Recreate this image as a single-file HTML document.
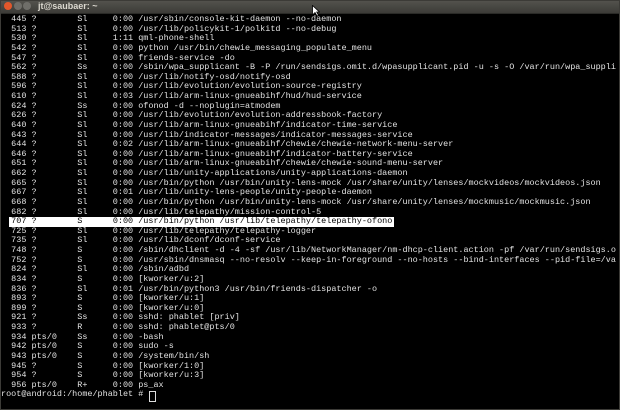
<!DOCTYPE html>
<html><head><meta charset="utf-8"><style>
html,body{margin:0;padding:0;background:#000;width:620px;height:410px;overflow:hidden}
#tb{position:absolute;left:0;top:0;width:620px;height:13px;background:linear-gradient(#55544f,#3c3b37);border-bottom:1px solid #2a2a27}
.b{position:absolute;top:2px;width:8px;height:8px;border-radius:50%}
#title{position:absolute;left:38px;top:0px;font:bold 9px "Liberation Sans",sans-serif;color:#dcd9d0;line-height:13px}
#term{position:absolute;left:1px;top:15px;width:617px;height:393px;overflow:hidden}
pre{position:relative;margin:0;font-family:"Liberation Mono",monospace;font-size:8.48px;line-height:9.63px;color:#e2e2e2;white-space:pre}
#hl{position:absolute;left:8px;top:202px;width:385px;height:9.6px;background:#fff}
#cur{position:absolute;left:148px;top:376px;width:5px;height:9px;border:1px solid #ddd}
#frame{position:absolute;left:0;top:0;width:618px;height:408px;border:1px solid #3c3b37;pointer-events:none}
</style></head><body>
<div id="tb">
<div class="b" style="left:4px;background:#e2572b"></div>
<div class="b" style="left:14px;background:#6f6e69"></div>
<div class="b" style="left:23px;background:#6f6e69"></div>
<div id="title">jt@saubaer: ~</div>
<svg style="position:absolute;left:312px;top:5px" width="8" height="12" viewBox="0 0 8 12"><path d="M0.5 0.5 L0.5 10 L3 7.5 L5 11 L6.5 10.3 L4.7 7 L7.5 7 Z" fill="#fff" stroke="#000" stroke-width="0.8"/></svg>
</div>
<div id="term">
<div id="hl"></div>
<pre>  445 ?        Sl     0:00 /usr/sbin/console-kit-daemon --no-daemon
  513 ?        Sl     0:00 /usr/lib/policykit-1/polkitd --no-debug
  530 ?        Sl     1:11 qml-phone-shell
  542 ?        Sl     0:00 python /usr/bin/chewie_messaging_populate_menu
  547 ?        Sl     0:00 friends-service -do
  562 ?        Ss     0:00 /sbin/wpa_supplicant -B -P /run/sendsigs.omit.d/wpasupplicant.pid -u -s -O /var/run/wpa_suppli
  588 ?        Sl     0:00 /usr/lib/notify-osd/notify-osd
  596 ?        Sl     0:00 /usr/lib/evolution/evolution-source-registry
  610 ?        Sl     0:03 /usr/lib/arm-linux-gnueabihf/hud/hud-service
  624 ?        Ss     0:00 ofonod -d --noplugin=atmodem
  626 ?        Sl     0:00 /usr/lib/evolution/evolution-addressbook-factory
  640 ?        Sl     0:00 /usr/lib/arm-linux-gnueabihf/indicator-time-service
  643 ?        Sl     0:00 /usr/lib/indicator-messages/indicator-messages-service
  644 ?        Sl     0:02 /usr/lib/arm-linux-gnueabihf/chewie/chewie-network-menu-server
  646 ?        Sl     0:00 /usr/lib/arm-linux-gnueabihf/indicator-battery-service
  651 ?        Sl     0:00 /usr/lib/arm-linux-gnueabihf/chewie/chewie-sound-menu-server
  662 ?        Sl     0:00 /usr/lib/unity-applications/unity-applications-daemon
  665 ?        Sl     0:00 /usr/bin/python /usr/bin/unity-lens-mock /usr/share/unity/lenses/mockvideos/mockvideos.json
  667 ?        Sl     0:01 /usr/lib/unity-lens-people/unity-people-daemon
  668 ?        Sl     0:00 /usr/bin/python /usr/bin/unity-lens-mock /usr/share/unity/lenses/mockmusic/mockmusic.json
  682 ?        Sl     0:00 /usr/lib/telepathy/mission-control-5
  <span style="color:#000">707 ?        S      0:00 /usr/bin/python /usr/lib/telepathy/telepathy-ofono</span>
  725 ?        Sl     0:00 /usr/lib/telepathy/telepathy-logger
  735 ?        Sl     0:00 /usr/lib/dconf/dconf-service
  748 ?        S      0:00 /sbin/dhclient -d -4 -sf /usr/lib/NetworkManager/nm-dhcp-client.action -pf /var/run/sendsigs.o
  752 ?        S      0:00 /usr/sbin/dnsmasq --no-resolv --keep-in-foreground --no-hosts --bind-interfaces --pid-file=/va
  824 ?        Sl     0:00 /sbin/adbd
  834 ?        S      0:00 [kworker/u:2]
  836 ?        Sl     0:01 /usr/bin/python3 /usr/bin/friends-dispatcher -o
  893 ?        S      0:00 [kworker/u:1]
  899 ?        S      0:00 [kworker/u:0]
  921 ?        Ss     0:00 sshd: phablet [priv]
  933 ?        R      0:00 sshd: phablet@pts/0
  934 pts/0    Ss     0:00 -bash
  942 pts/0    S      0:00 sudo -s
  943 pts/0    S      0:00 /system/bin/sh
  945 ?        S      0:00 [kworker/1:0]
  954 ?        S      0:00 [kworker/u:3]
  956 pts/0    R+     0:00 ps_ax
root@android:/home/phablet # </pre>
<div id="cur"></div>
</div>
<div id="frame"></div>
</body></html>
